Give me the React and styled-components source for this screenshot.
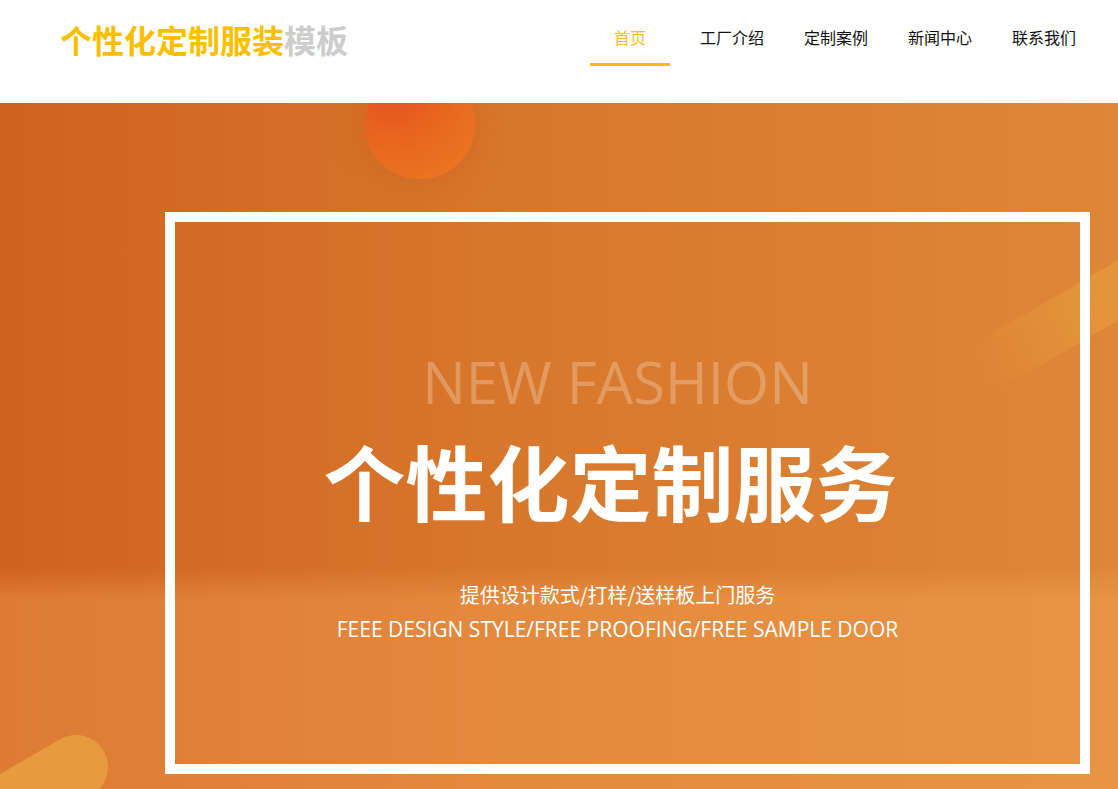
import React from 'react';
import styled, { createGlobalStyle } from 'styled-components';

const GlobalStyle = createGlobalStyle`
  html, body {
    margin: 0;
    padding: 0;
    overflow: hidden;
    background: #fff;
    font-family: "Open Sans", "Noto Sans CJK SC", sans-serif;
  }
  * { box-sizing: border-box; }
`;

const Page = styled.div`
  width: 1118px;
  min-height: 789px;
`;

const Header = styled.header`
  height: 103px;
  display: flex;
  justify-content: space-between;
  align-items: flex-start;
  padding: 0 22px 0 60px;
  background: #fff;
`;

const Logo = styled.h1`
  margin: 0;
  font-family: "Noto Sans CJK SC", sans-serif;
  font-size: 32px;
  font-weight: 700;
  line-height: 78px;
  color: #fcbf00;

  span {
    color: #cccccc;
  }
`;

const Nav = styled.ul`
  display: flex;
  margin: 0;
  padding: 0;
  list-style: none;
`;

const NavItem = styled.li`
  height: 66px;
  min-width: 80px;
  padding: 26px 20px 0;
  margin-right: ${(p) => (p.$active ? '10px' : '0')};
  text-align: center;
  font-family: "Noto Sans CJK SC", sans-serif;
  font-size: 16px;
  line-height: 22px;
  color: ${(p) => (p.$active ? '#fbbd14' : '#111')};
  border-bottom: 3px solid ${(p) => (p.$active ? '#fcbf00' : 'transparent')};
  cursor: pointer;
`;

const Banner = styled.section`
  position: relative;
  height: 686px;
  overflow: hidden;
  padding: 109px 0 0 165px;
  background:
    linear-gradient(180deg, rgba(255, 180, 100, 0) 465px, rgba(255, 180, 100, 0.3) 497px),
    linear-gradient(90deg, #d0621f 0%, #d8772c 45%, #de8737 100%);
`;

const Sun = styled.div`
  position: absolute;
  left: 365px;
  top: -34px;
  width: 110px;
  height: 110px;
  border-radius: 50%;
  background: radial-gradient(circle at 25% 15%, #e3501f 0%, #e8661f 45%, #ed7b22 100%);
  box-shadow: 0 0 30px 6px rgba(200, 90, 20, 0.3);
`;

const Stripe = styled.div`
  position: absolute;
  left: 975px;
  top: 244px;
  width: 240px;
  height: 52px;
  border-radius: 26px;
  transform-origin: 0 50%;
  transform: rotate(-30deg);
  background: linear-gradient(90deg, rgba(240, 170, 70, 0) 0%, rgba(240, 170, 70, 0.4) 60%);
`;

const Pill = styled.div`
  position: absolute;
  left: -132px;
  top: 632px;
  width: 240px;
  height: 64px;
  border-radius: 32px;
  transform-origin: calc(100% - 32px) 50%;
  transform: rotate(-30deg);
  background: #e69b3e;
`;

const Frame = styled.div`
  position: relative;
  width: 925px;
  height: 562px;
  border: 10px solid #fff;
  display: flex;
  flex-direction: column;
  align-items: center;
  padding: 131px 20px 0 0;
  color: #fff;
  text-align: center;
`;

const Kicker = styled.div`
  font-family: "Open Sans", sans-serif;
  font-size: 58px;
  font-weight: 400;
  line-height: 1;
  color: rgba(255, 255, 255, 0.25);
`;

const Title = styled.h2`
  margin: 28px 14px 0 0;
  font-family: "Noto Sans CJK SC", sans-serif;
  font-size: 82px;
  font-weight: 700;
  line-height: 1;
`;

const SubCn = styled.p`
  margin: 62px 0 0;
  font-family: "Noto Sans CJK SC", sans-serif;
  font-size: 20px;
  line-height: 24px;
`;

const SubEn = styled.p`
  margin: 10px 0 0;
  font-family: "Open Sans", sans-serif;
  font-size: 21px;
  line-height: 24px;
`;

const navItems = ['首页', '工厂介绍', '定制案例', '新闻中心', '联系我们'];

export default function App() {
  return (
    <Page>
      <GlobalStyle />
      <Header>
        <Logo>
          个性化定制服装<span>模板</span>
        </Logo>
        <Nav>
          {navItems.map((item, i) => (
            <NavItem key={item} $active={i === 0}>
              {item}
            </NavItem>
          ))}
        </Nav>
      </Header>

      <Banner>
        <Sun />
        <Stripe />
        <Pill />
        <Frame>
          <Kicker>NEW FASHION</Kicker>
          <Title>个性化定制服务</Title>
          <SubCn>提供设计款式/打样/送样板上门服务</SubCn>
          <SubEn>FEEE DESIGN STYLE/FREE PROOFING/FREE SAMPLE DOOR</SubEn>
        </Frame>
      </Banner>
    </Page>
  );
}
